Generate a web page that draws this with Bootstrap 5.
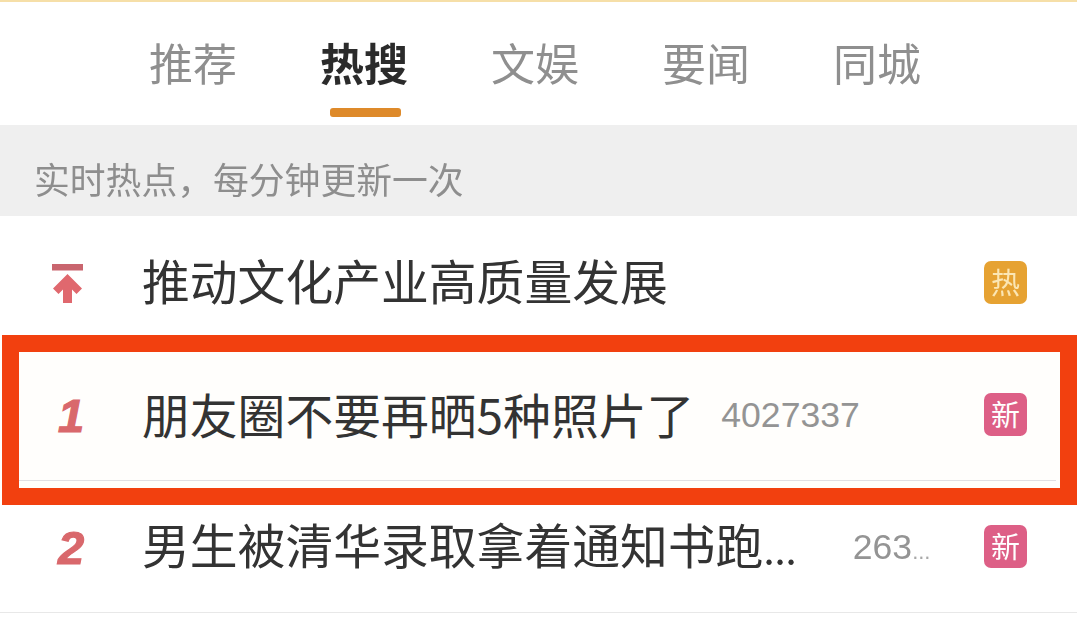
<!DOCTYPE html>
<html lang="zh-CN">
<head>
  <meta charset="UTF-8" />
  <meta name="viewport" content="width=device-width, initial-scale=1.0"/>
  <title>热搜</title>
  <link href="https://cdn.jsdelivr.net/npm/bootstrap@5.3.0/dist/css/bootstrap.min.css" rel="stylesheet"/>
  <style>
    html, body {
      height: 100%;
      overflow: hidden;
      background: #fff;
    }

    body {
      font-family: "Noto Sans CJK SC", "Liberation Sans", sans-serif;
      color: #333;
    }

    /* the reference is a soft, recompressed photo of a phone screen */
    .page-wrap {
      filter: blur(0.5px);
    }

    .top-strip {
      height: 2px;
      background: #f6dfa8;
    }

    .tab-bar {
      height: 123px;
      padding-left: 149px;
      gap: 83px;
    }

    .tab-item {
      position: relative;
      font-size: 44px;
      line-height: 1;
      color: #8f8f8f;
      padding-top: 38px;
    }

    .tab-item.is-on {
      color: #2b2b2b;
      font-weight: 700;
    }

    .tab-item.is-on::after {
      content: "";
      position: absolute;
      left: 10px;
      right: 7px;
      top: 106px;
      height: 9px;
      border-radius: 3px;
      background: #de8a2a;
    }

    .notice-bar {
      height: 91px;
      padding: 29px 0 0 34px;
      background: #efefef;
      color: #8e8e8e;
      font-size: 35.8px;
      line-height: 48px;
    }

    .hot-row {
      padding-right: 50px;
      position: relative;
    }

    .row-top {
      height: 119px;
      padding-top: 16px;
    }

    .row-boxed {
      height: 170px;
      padding-bottom: 4px;
      background: #fffefc;
    }

    /* red marker drawn over the row */
    .row-boxed::after {
      content: "";
      position: absolute;
      inset: 0 0 0 2px;
      border: 17px solid #f2400f;
    }

    .row-boxed::before {
      content: "";
      position: absolute;
      left: 19px;
      right: 21px;
      top: 145px;
      height: 1px;
      background: #e0dfe4;
    }

    .row-last {
      height: 108px;
      padding-bottom: 22px;
      border-bottom: 1px solid #e8e8e8;
    }

    .rank-cell {
      flex: 0 0 142px;
      text-align: center;
      color: #d9686c;
      font-family: "Liberation Sans", sans-serif;
      font-size: 47px;
      font-style: italic;
      font-weight: 700;
      line-height: 1;
      -webkit-text-stroke: 1.2px #d9686c;
    }

    .row-boxed .rank-cell {
      padding-bottom: 6px;
    }

    .rise-icon {
      display: block;
      margin-left: 52px;
    }

    .hot-title {
      font-size: 47.8px;
      line-height: 60px;
      color: #333;
      white-space: nowrap;
      padding-bottom: 8px;
    }

    .row-last .hot-title {
      padding-bottom: 5px;
    }

    .title-dots {
      font-size: 40px;
    }

    .hot-count {
      font-family: "Liberation Sans", sans-serif;
      font-size: 35.6px;
      color: #949494;
      white-space: nowrap;
    }

    .count-dots {
      font-size: 22px;
      color: #a8a8a8;
    }

    .count-a { margin-left: 27px; margin-bottom: 4px; }
    .count-b { margin-left: 56px; }

    .tag-box {
      width: 43px;
      height: 43px;
      border-radius: 7px;
      color: #fff;
      font-size: 29px;
      line-height: 1;
      padding-bottom: 3px;
      margin-bottom: 2px;
    }

    .row-boxed .tag-box {
      margin-bottom: 7px;
    }

    .tag-hot { background: #e6a232; color: #fbe6b4; }
    .tag-new { background: #dd5f86; }
  </style>
</head>
<body>
  <div class="page-wrap">
    <div class="top-strip"></div>

    <div class="tab-bar d-flex align-items-start">
      <div class="tab-item">推荐</div>
      <div class="tab-item is-on">热搜</div>
      <div class="tab-item">文娱</div>
      <div class="tab-item">要闻</div>
      <div class="tab-item">同城</div>
    </div>

    <div class="notice-bar">实时热点，每分钟更新一次</div>

    <div class="hot-row row-top d-flex align-items-center">
      <div class="rank-cell">
        <svg class="rise-icon" width="32" height="40" viewBox="0 0 32 40">
          <rect x="0" y="0" width="31" height="6.5" fill="#c9656e"/>
          <path d="M15.5 10 L30 24.5 L24.5 30 L20 25.5 L20 39 L11 39 L11 25.5 L6.5 30 L1 24.5 Z" fill="#e0686e"/>
        </svg>
      </div>
      <div class="hot-title">推动文化产业高质量发展</div>
      <div class="tag-box tag-hot d-flex align-items-center justify-content-center ms-auto">热</div>
    </div>

    <div class="hot-row row-boxed d-flex align-items-center">
      <div class="rank-cell">1</div>
      <div class="hot-title">朋友圈不要再晒5种照片了</div>
      <div class="hot-count count-a">4027337</div>
      <div class="tag-box tag-new d-flex align-items-center justify-content-center ms-auto">新</div>
    </div>

    <div class="hot-row row-last d-flex align-items-center">
      <div class="rank-cell">2</div>
      <div class="hot-title">男生被清华录取拿着通知书跑<span class="title-dots">...</span></div>
      <div class="hot-count count-b">263<span class="count-dots">...</span></div>
      <div class="tag-box tag-new d-flex align-items-center justify-content-center ms-auto">新</div>
    </div>
  </div>

  <script src="https://cdn.jsdelivr.net/npm/bootstrap@5.3.0/dist/js/bootstrap.bundle.min.js"></script>
</body>
</html>
